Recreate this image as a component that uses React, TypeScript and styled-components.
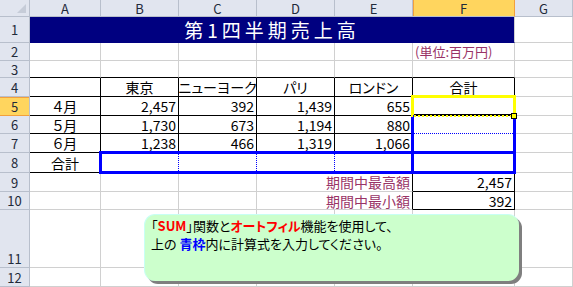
import React from 'react';
import styled, { createGlobalStyle } from 'styled-components';

const GlobalStyle = createGlobalStyle`
  html, body {
    margin: 0;
    padding: 0;
    background: #fff;
    overflow: hidden;
  }
  body {
    font-family: "Noto Sans CJK JP", "Noto Sans", sans-serif;
  }
`;

const COLS = ['A', 'B', 'C', 'D', 'E', 'F', 'G'];
const ROW_HEIGHTS = [17, 26, 18, 17, 19, 19, 18, 19, 20, 19, 18, 58, 19];

const GRID = '1px solid #d0d0d0';
const BLACK = '1px solid #000';
const BLUE_DOT = '1px dotted #0000ff';

const PLUM = '#993366';

type Align = 'left' | 'center' | 'right';

interface CellSpec {
  text?: React.ReactNode;
  span?: number;
  align?: Align;
  color?: string;
  bg?: string;
  size?: number;
  spacing?: number;
}

const Sheet = styled.div`
  position: relative;
  width: 573px;
  height: 287px;
  display: grid;
  grid-template-columns: 30px 71px 78px 78px 78px 78px 102px 58px;
  grid-template-rows: ${ROW_HEIGHTS.map((h) => `${h}px`).join(' ')};
  font-feature-settings: 'palt';
  overflow: hidden;
`;

const Header = styled.div<{ $r: number; $c: number; $active?: boolean; $valign?: string }>`
  grid-row: ${(p) => p.$r + 1};
  grid-column: ${(p) => p.$c + 1};
  box-sizing: border-box;
  display: flex;
  justify-content: center;
  align-items: ${(p) => p.$valign || 'center'};
  font-size: 13px;
  line-height: 17px;
  color: #1f2a3a;
  background: ${(p) => (p.$active ? '#ffd55e' : '#e1e5ef')};
  border-right: 1px solid ${(p) => (p.$active && p.$r === 0 ? '#f2a03c' : '#b8bfcc')};
  border-bottom: 1px solid ${(p) => (p.$active && p.$c === 0 ? '#f2a03c' : '#b8bfcc')};
  ${(p) => (p.$active && p.$r === 0 ? 'box-shadow: inset 1px 0 0 #f2a03c;' : '')}
  ${(p) => (p.$active && p.$c === 0 ? 'box-shadow: inset 0 1px 0 #f2a03c;' : '')}
`;

const Corner = styled.div`
  grid-row: 1;
  grid-column: 1;
  position: relative;
  background: #e1e5ef;
  border-right: 1px solid #b8bfcc;
  border-bottom: 1px solid #b8bfcc;

  &::after {
    content: '';
    position: absolute;
    right: 3px;
    bottom: 3px;
    border-style: solid;
    border-width: 0 0 9px 9px;
    border-color: transparent transparent #c6ccd8 transparent;
  }
`;

const Cell = styled.div<{
  $r: number;
  $c: number;
  $span: number;
  $right: string;
  $bottom: string;
  $align: Align;
  $color: string;
  $bg: string;
  $size: number;
  $spacing: number;
}>`
  grid-row: ${(p) => p.$r + 1};
  grid-column: ${(p) => p.$c + 1} / span ${(p) => p.$span};
  box-sizing: border-box;
  display: flex;
  align-items: center;
  justify-content: ${(p) =>
    p.$align === 'left' ? 'flex-start' : p.$align === 'right' ? 'flex-end' : 'center'};
  padding: 0 2px;
  white-space: nowrap;
  overflow: visible;
  font-size: ${(p) => p.$size}px;
  letter-spacing: ${(p) => p.$spacing}px;
  color: ${(p) => p.$color};
  background: ${(p) => p.$bg};
  border-right: ${(p) => p.$right};
  border-bottom: ${(p) => p.$bottom};
`;

const Range = styled.div<{ $rows: string; $cols: string; $tone: string; $z: number }>`
  grid-row: ${(p) => p.$rows};
  grid-column: ${(p) => p.$cols};
  margin: -2px -1px -1px -2px;
  border: 3px solid ${(p) => p.$tone};
  z-index: ${(p) => p.$z};
  pointer-events: none;
`;

const ActiveCell = styled(Range)`
  position: relative;
  border-bottom: 2px dotted ${(p) => p.$tone};
  background: linear-gradient(to top, #000 1px, transparent 1px);

  &::after {
    content: '';
    position: absolute;
    right: -4px;
    bottom: -4px;
    width: 4px;
    height: 4px;
    background: #ffff00;
    border: 1px solid #000;
  }
`;

const Callout = styled.div`
  position: absolute;
  left: 144px;
  top: 214px;
  width: 375px;
  height: 67px;
  box-sizing: border-box;
  padding: 2px 0 0 6px;
  background: #ccffcc;
  border-radius: 11px;
  border-top: 1px solid #c8fff4;
  border-left: 1px solid #c8fff4;
  box-shadow: 3px 3px 0 #7f7f7f;
  font-size: 13px;
  line-height: 18px;
  color: #000;
  z-index: 4;
`;

const Hot = styled.b<{ $tone: string }>`
  color: ${(p) => p.$tone};
  font-weight: 700;
`;

const rows: Record<number, CellSpec[]> = {
  1: [
    { text: '第1四半期売上高', span: 6, bg: '#000080', color: '#fff', size: 19, spacing: 4 },
    {},
  ],
  2: [{}, {}, {}, {}, {}, { text: '(単位:百万円)', align: 'left', color: PLUM, size: 13 }, {}],
  4: [
    {},
    { text: '東京' },
    { text: 'ニューヨーク' },
    { text: 'パリ' },
    { text: 'ロンドン' },
    { text: '合計' },
    {},
  ],
  5: [
    { text: '４月' },
    { text: '2,457', align: 'right' },
    { text: '392', align: 'right' },
    { text: '1,439', align: 'right' },
    { text: '655', align: 'right' },
    {},
    {},
  ],
  6: [
    { text: '５月' },
    { text: '1,730', align: 'right' },
    { text: '673', align: 'right' },
    { text: '1,194', align: 'right' },
    { text: '880', align: 'right' },
    {},
    {},
  ],
  7: [
    { text: '６月' },
    { text: '1,238', align: 'right' },
    { text: '466', align: 'right' },
    { text: '1,319', align: 'right' },
    { text: '1,066', align: 'right' },
    {},
    {},
  ],
  8: [{ text: '合計' }, {}, {}, {}, {}, {}, {}],
  9: [
    {},
    {},
    {},
    { text: '期間中最高額', span: 2, align: 'right', color: PLUM },
    { text: '2,457', align: 'right' },
    {},
  ],
  10: [
    {},
    {},
    {},
    { text: '期間中最小額', span: 2, align: 'right', color: PLUM },
    { text: '392', align: 'right' },
    {},
  ],
};

const inTable = (r: number, c: number) => r >= 4 && r <= 8 && c >= 1 && c <= 6;

const rightEdge = (r: number, c: number) => {
  if (r === 8 && c >= 2 && c <= 4) return BLUE_DOT;
  if (inTable(r, c)) return BLACK;
  if ((r === 9 || r === 10) && (c === 5 || c === 6)) return BLACK;
  return GRID;
};

const bottomEdge = (r: number, c: number) => {
  if (r === 6 && c === 6) return BLUE_DOT;
  if (r === 3 && c >= 1 && c <= 6) return BLACK;
  if (inTable(r, c)) return BLACK;
  if ((r === 9 || r === 10) && c === 6) return BLACK;
  if (r === 1 && c <= 6) return '1px solid #000080';
  return GRID;
};

const SheetRow: React.FC<{ r: number }> = ({ r }) => {
  const specs: CellSpec[] = rows[r] || COLS.map(() => ({}));
  let c = 1;
  return (
    <>
      <Header $r={r} $c={0} $active={r === 5} $valign={r === 11 ? 'flex-end' : 'center'}>
        {r}
      </Header>
      {specs.map((s, i) => {
        const start = c;
        const span = s.span || 1;
        const last = start + span - 1;
        c += span;
        return (
          <Cell
            key={i}
            $r={r}
            $c={start}
            $span={span}
            $right={rightEdge(r, last)}
            $bottom={bottomEdge(r, last)}
            $align={s.align || 'center'}
            $color={s.color || '#000'}
            $bg={s.bg || '#fff'}
            $size={s.size || 14}
            $spacing={s.spacing || 0}
          >
            {s.text}
          </Cell>
        );
      })}
    </>
  );
};

export default function App() {
  return (
    <>
      <GlobalStyle />
      <Sheet>
        <Corner />
        {COLS.map((name, i) => (
          <Header key={name} $r={0} $c={i + 1} $active={name === 'F'}>
            {name}
          </Header>
        ))}
        {Array.from({ length: 12 }, (_, i) => (
          <SheetRow key={i} r={i + 1} />
        ))}

        <Range $rows="9" $cols="3 / 8" $tone="#0000ff" $z={2} />
        <Range $rows="6 / 10" $cols="7" $tone="#0000ff" $z={2} />
        <ActiveCell $rows="6" $cols="7" $tone="#ffff00" $z={3} />

        <Callout>
          「<Hot $tone="#ff0000">SUM</Hot>」関数と<Hot $tone="#ff0000">オートフィル</Hot>機能を使用して、
          <br />
          上の <Hot $tone="#0000ff">青枠</Hot>内に計算式を入力してください。
        </Callout>
      </Sheet>
    </>
  );
}
